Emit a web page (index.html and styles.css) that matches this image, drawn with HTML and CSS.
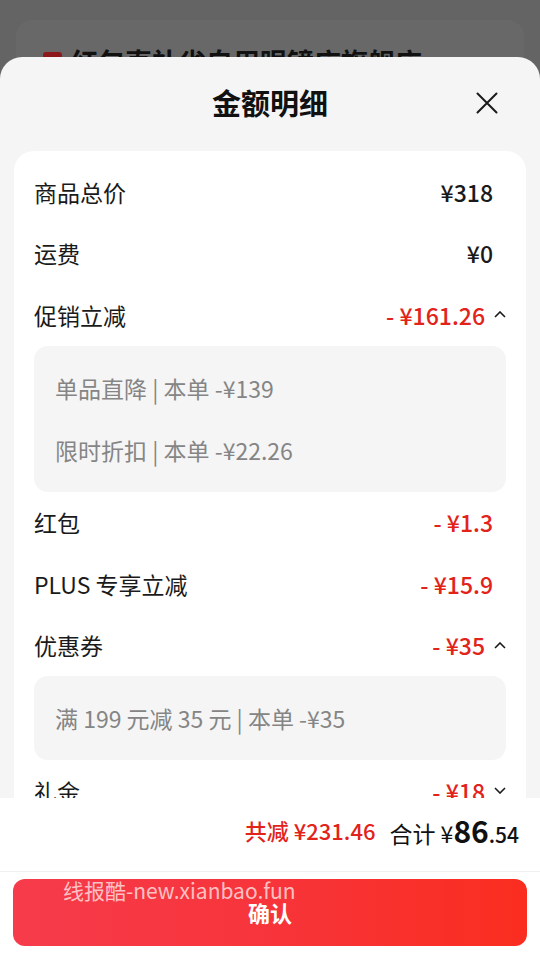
FILE: index.html
```html
<!DOCTYPE html>
<html lang="zh-CN">
<head>
    <meta charset="UTF-8">
    <meta name="viewport" content="width=device-width, initial-scale=1.0">
    <title>金额明细</title>
    <link rel="stylesheet" href="styles.css">
</head>
<body>

    <!-- page behind the overlay -->
    <div class="behind">
        <div class="behind-card">
            <div class="shop-title">
                <span class="shop-badge"></span>
                <span>红包直补省自用眼镜店旗舰店 ›</span>
            </div>
        </div>
    </div>

    <div class="sheet">
        <div class="sheet-head">
            <h2>金额明细</h2>
            <button class="close" aria-label="关闭">
                <svg width="22" height="22" viewBox="0 0 22 22">
                    <path d="M1.5 1.5 L20.5 20.5 M20.5 1.5 L1.5 20.5" stroke="#1a1a1a" stroke-width="2" fill="none" stroke-linecap="round"/>
                </svg>
            </button>
        </div>

        <div class="sheet-body">
            <div class="card">
                <div class="row">
                    <span>商品总价</span>
                    <span class="value">¥318</span>
                </div>
                <div class="row">
                    <span>运费</span>
                    <span class="value">¥0</span>
                </div>
                <div class="row">
                    <span>促销立减</span>
                    <span class="value red has-toggle">- ¥161.26
                        <svg class="toggle" width="12" height="7" viewBox="0 0 12 7"><path d="M1 6 L6 1 L11 6" stroke="#1a1a1a" stroke-width="1.6" fill="none"/></svg>
                    </span>
                </div>
                <div class="detail">
                    <div class="detail-line">单品直降 | 本单 -¥139</div>
                    <div class="detail-line">限时折扣 | 本单 -¥22.26</div>
                </div>
                <div class="row">
                    <span>红包</span>
                    <span class="value red">- ¥1.3</span>
                </div>
                <div class="row">
                    <span>PLUS 专享立减</span>
                    <span class="value red">- ¥15.9</span>
                </div>
                <div class="row">
                    <span>优惠券</span>
                    <span class="value red has-toggle">- ¥35
                        <svg class="toggle" width="12" height="7" viewBox="0 0 12 7"><path d="M1 6 L6 1 L11 6" stroke="#1a1a1a" stroke-width="1.6" fill="none"/></svg>
                    </span>
                </div>
                <div class="detail">
                    <div class="detail-line">满 199 元减 35 元 | 本单 -¥35</div>
                </div>
                <div class="row">
                    <span>礼金</span>
                    <span class="value red has-toggle">- ¥18
                        <svg class="toggle" width="12" height="7" viewBox="0 0 12 7"><path d="M1 1 L6 6 L11 1" stroke="#1a1a1a" stroke-width="1.6" fill="none"/></svg>
                    </span>
                </div>
            </div>
        </div>

        <div class="sheet-foot">
            <div class="summary">
                <span class="saved">共减 ¥231.46</span>
                <span class="total">合计 ¥<b>86</b><small>.54</small></span>
            </div>
            <div class="btn-wrap">
                <button class="confirm">
                    <span class="watermark">线报酷-new.xianbao.fun</span>
                    确认
                </button>
            </div>
        </div>
    </div>

</body>
</html>
```

FILE: styles.css
```css
* {
    box-sizing: border-box;
}

body {
    margin: 0;
    width: 540px;
    height: 958px;
    overflow: hidden;
    position: relative;
    background: #646464;
    font-family: "Noto Sans CJK SC", "Noto Sans", sans-serif;
    color: #1a1a1a;
}

.behind {
    padding: 20px 16px 0;
}

.behind-card {
    height: 220px;
    background: #686868;
    border-radius: 16px;
    padding: 22px 27px;
}

.shop-title {
    display: flex;
    align-items: center;
    gap: 9px;
    font-size: 27px;
    font-weight: bold;
    color: #111;
}

.shop-badge {
    width: 19px;
    height: 19px;
    border-radius: 3px;
    background: #8c1a1a;
}

.sheet {
    position: absolute;
    top: 57px;
    left: 0;
    right: 0;
    bottom: 0;
    background: #f5f5f5;
    border-radius: 22px 22px 0 0;
    display: flex;
    flex-direction: column;
}

.sheet-head {
    height: 94px;
    flex: none;
    display: flex;
    align-items: center;
    justify-content: center;
    position: relative;
    padding-bottom: 4px;
}

.sheet-head h2 {
    margin: 0;
    font-size: 29px;
    font-weight: bold;
    color: #111;
}

.close {
    position: absolute;
    right: 42px;
    top: 35px;
    width: 22px;
    height: 22px;
    padding: 0;
    border: none;
    background: none;
}

.close svg {
    display: block;
}

.sheet-body {
    flex: 1;
    overflow: hidden;
    padding: 0 14px;
}

.card {
    background: #fff;
    border-radius: 20px;
    padding: 10px 20px;
}

.row {
    height: 61.5px;
    display: flex;
    align-items: center;
    justify-content: space-between;
    font-size: 23px;
    color: #1a1a1a;
}

.value {
    margin-right: 13px;
    font-weight: 500;
    display: flex;
    align-items: center;
}

.value.red {
    color: #e2231a;
}

.value.has-toggle {
    margin-right: 0;
}

.toggle {
    margin-left: 9px;
}

.detail {
    background: #f5f5f5;
    border-radius: 14px;
    padding: 11px 21px;
}

.detail-line {
    height: 62px;
    display: flex;
    align-items: center;
    font-size: 23px;
    color: #858585;
}

.sheet-foot {
    flex: none;
    background: #fff;
}

.summary {
    height: 74px;
    padding: 0 21px 10px 0;
    display: flex;
    align-items: center;
    justify-content: flex-end;
    gap: 14px;
    border-bottom: 1px solid #f0f0f0;
}

.saved {
    font-size: 22px;
    font-weight: 500;
    color: #e2231a;
}

.total {
    font-size: 23px;
    color: #111;
}

.total b {
    font-size: 30px;
    font-weight: bold;
}

.total small {
    font-size: 21px;
    font-weight: 500;
}

.btn-wrap {
    padding: 7px 13px 12px;
}

.confirm {
    position: relative;
    width: 100%;
    height: 67px;
    border: none;
    border-radius: 12px;
    background: linear-gradient(90deg, #f63b4b 0%, #f7343a 50%, #fa2d1f 100%);
    color: #fff;
    font-family: inherit;
    font-size: 22px;
    font-weight: bold;
    padding-bottom: 2px;
}

.watermark {
    position: absolute;
    left: 50px;
    top: -4px;
    font-size: 21px;
    font-weight: normal;
    color: rgba(255, 255, 255, 0.7);
}
```
